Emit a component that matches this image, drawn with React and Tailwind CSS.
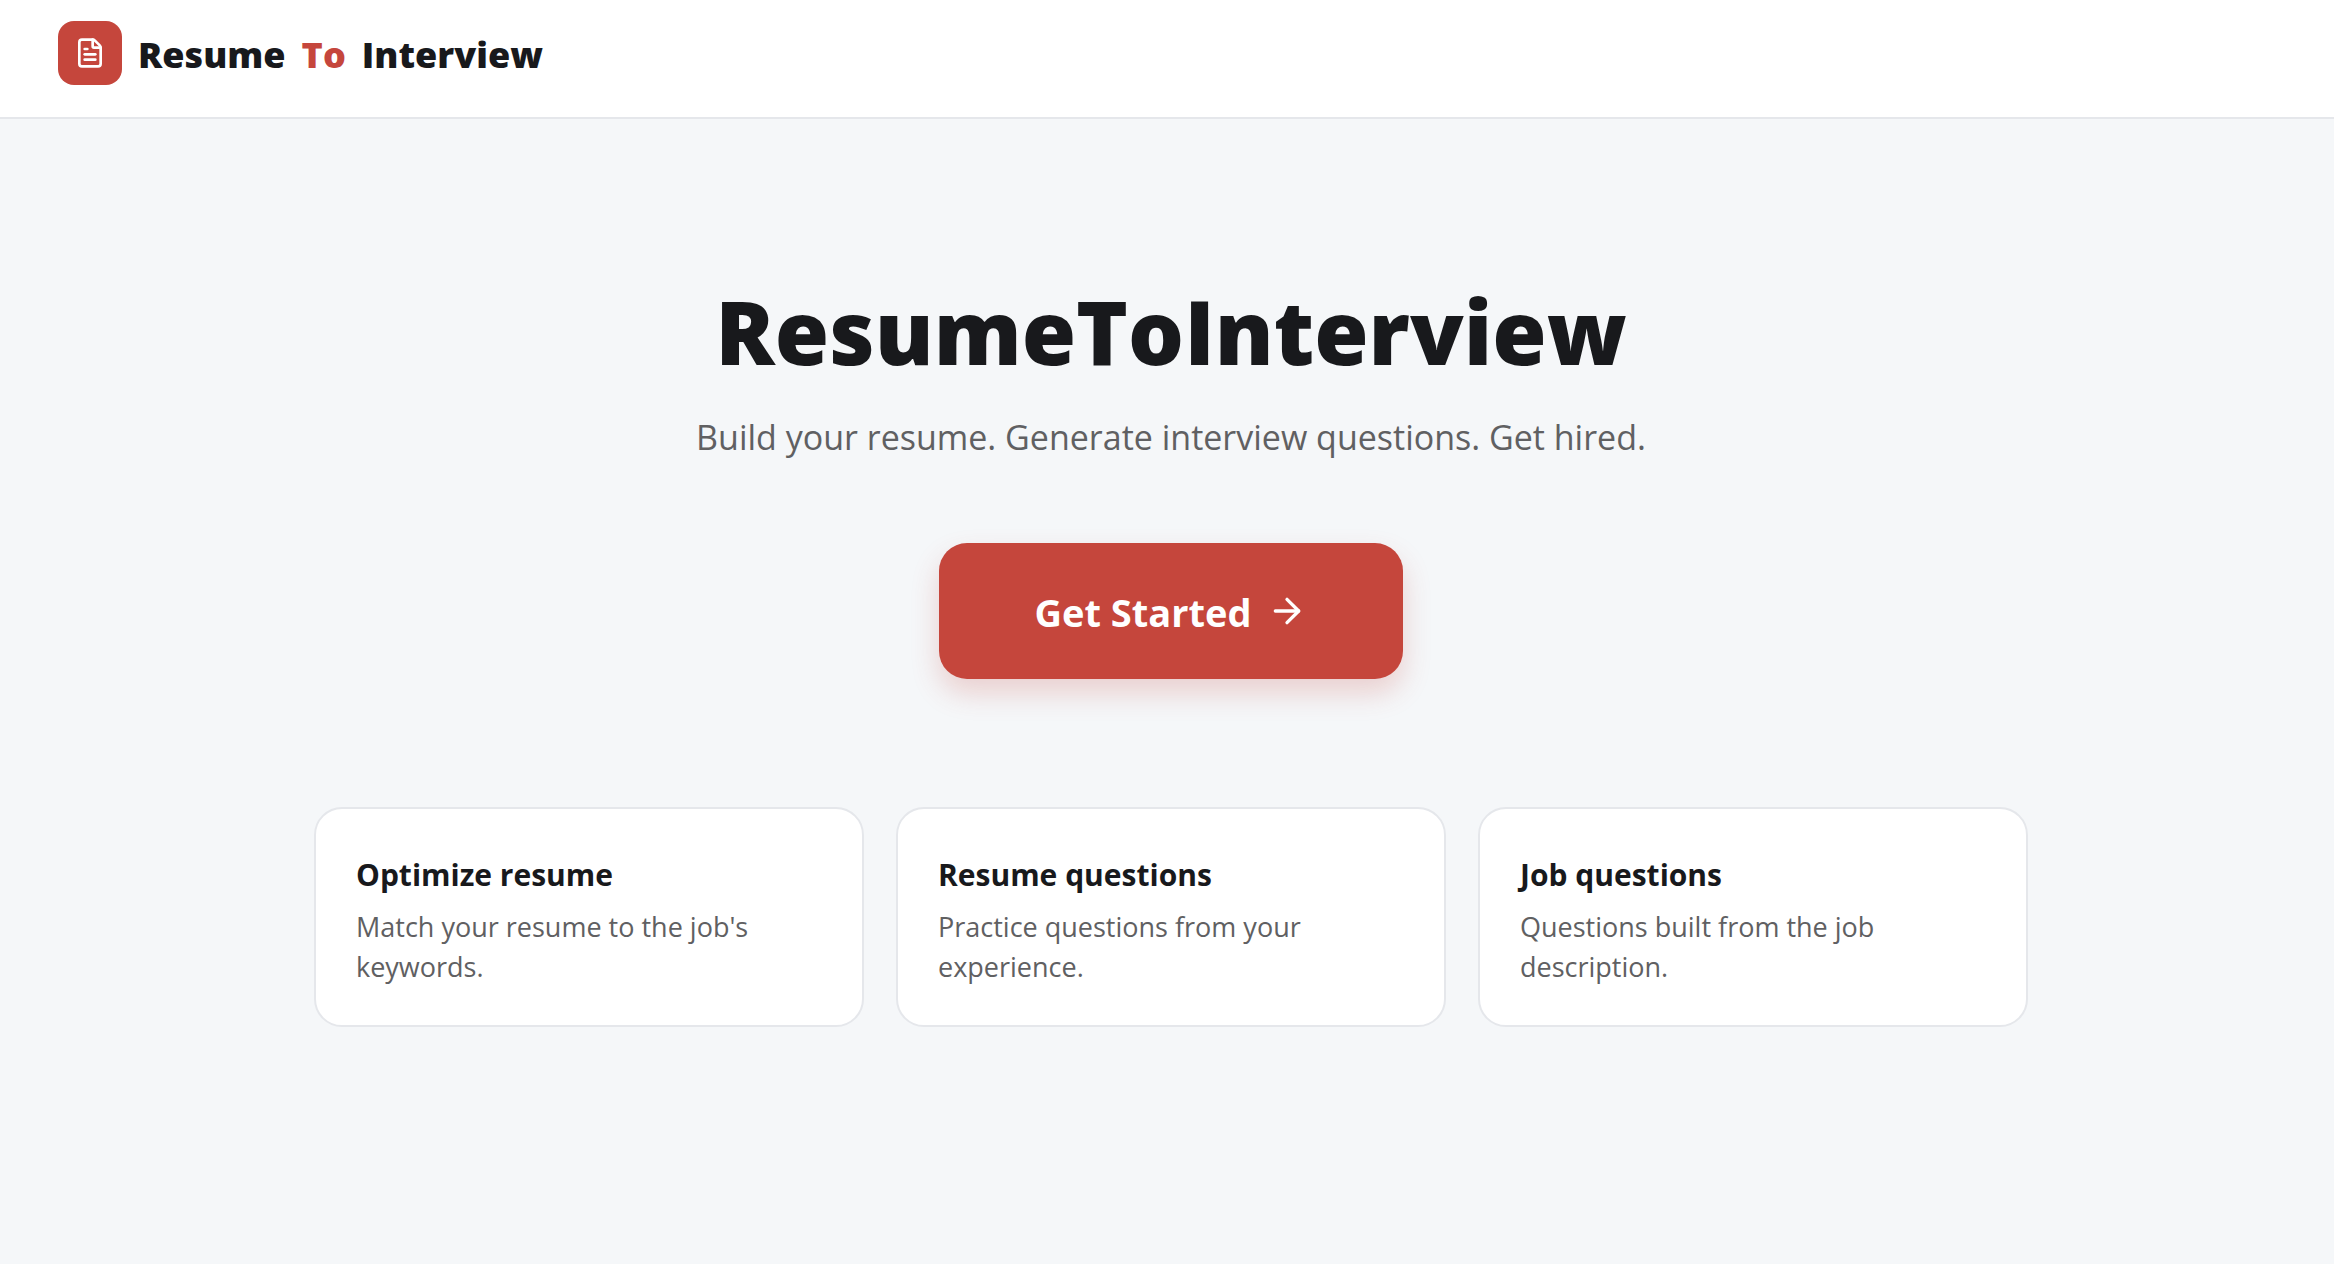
import { FileText, ArrowRight } from "lucide-react";

const features = [
  {
    title: "Optimize resume",
    text: "Match your resume to the job's keywords.",
  },
  {
    title: "Resume questions",
    text: "Practice questions from your experience.",
  },
  {
    title: "Job questions",
    text: "Questions built from the job description.",
  },
];

const Header = () => {
  return (
    <header className="bg-white border-b-2 border-[#e5e7eb] px-[58px] pt-[21px] pb-8">
      <a href="#" className="inline-flex items-center gap-4 align-top">
        <span className="flex h-16 w-16 items-center justify-center rounded-2xl bg-[#c5463c] text-white">
          <FileText size={32} strokeWidth={2} />
        </span>
        <span className="flex gap-4 pt-1 text-[36px] leading-15 font-extrabold">
          <span>Resume</span>
          <span className="text-[#c5463c]">To</span>
          <span>Interview</span>
        </span>
      </a>
    </header>
  );
};

const FeatureCard = ({ title, text }) => {
  return (
    <div className="rounded-[28px] border-2 border-[#e5e7eb] bg-white px-10 pt-[42px] pb-[38px]">
      <h2 className="mb-2 text-[30px] leading-12 font-bold">{title}</h2>
      <p className="text-[27px] leading-10 text-[#606062]">{text}</p>
    </div>
  );
};

const App = () => {
  return (
    <div className="min-h-screen bg-[#f5f7f9] font-['Open_Sans','Noto_Sans',sans-serif] text-[#18191c]">
      <Header />
      <main className="flex flex-col items-center pt-39 pr-8 pb-16 pl-10">
        <h1 className="text-[88px] leading-28 font-extrabold">ResumeToInterview</h1>
        <p className="mt-[22px] text-[34px] leading-14 text-[#606062]">
          Build your resume. Generate interview questions. Get hired.
        </p>
        <button
          type="button"
          className="mt-[78px] flex h-34 items-center gap-4 rounded-[28px] bg-[#c5463c] px-24 text-[38px] font-bold text-white shadow-[0_14px_28px_rgba(197,70,60,0.22)]"
        >
          <span className="pt-0.5">Get Started</span>
          <ArrowRight size={40} strokeWidth={2} />
        </button>
        <section className="mt-32 grid w-full max-w-[1714px] grid-cols-3 gap-8">
          {features.map((item) => (
            <FeatureCard key={item.title} title={item.title} text={item.text} />
          ))}
        </section>
      </main>
    </div>
  );
};

export default App;
